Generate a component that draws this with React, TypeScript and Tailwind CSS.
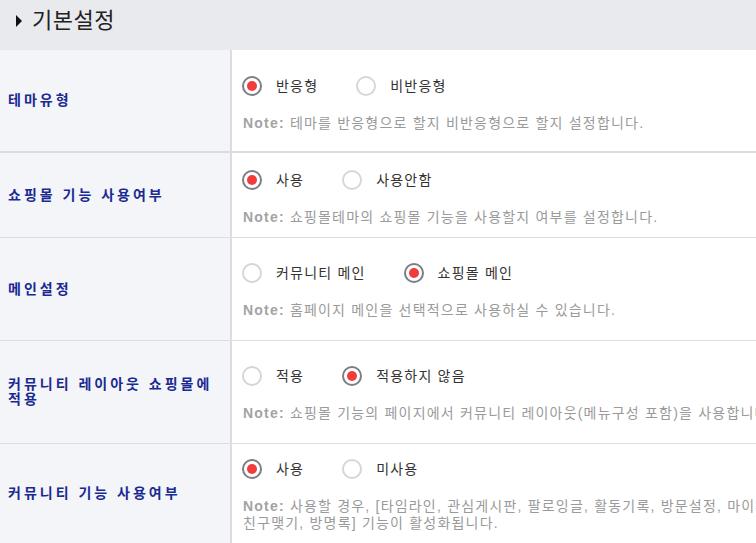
import React from "react";

type Opt = { label: string; checked: boolean };
type Row = {
  label: string;
  options: Opt[];
  note: React.ReactNode;
  h: string;
  pt: string;
  border: string;
};

function Radio({ checked }: { checked: boolean }) {
  return checked ? (
    <span className="flex h-[20px] w-[20px] shrink-0 items-center justify-center rounded-full border-2 border-[#7b7e86] bg-white">
      <span className="h-[10px] w-[10px] rounded-full bg-[#f23b3b]" />
    </span>
  ) : (
    <span className="h-[20px] w-[20px] shrink-0 rounded-full border-2 border-[#d6d6d6] bg-white" />
  );
}

const rows: Row[] = [
  {
    label: "테마유형",
    options: [
      { label: "반응형", checked: true },
      { label: "비반응형", checked: false },
    ],
    note: "테마를 반응형으로 할지 비반응형으로 할지 설정합니다.",
    h: "h-[103px]",
    pt: "pt-[26px]",
    border: "border-b-2 border-[#dcdcdc]",
  },
  {
    label: "쇼핑몰 기능 사용여부",
    options: [
      { label: "사용", checked: true },
      { label: "사용안함", checked: false },
    ],
    note: "쇼핑몰테마의 쇼핑몰 기능을 사용할지 여부를 설정합니다.",
    h: "h-[85px]",
    pt: "pt-[17px]",
    border: "border-b border-[#dedede]",
  },
  {
    label: "메인설정",
    options: [
      { label: "커뮤니티 메인", checked: false },
      { label: "쇼핑몰 메인", checked: true },
    ],
    note: "홈페이지 메인을 선택적으로 사용하실 수 있습니다.",
    h: "h-[103px]",
    pt: "pt-[25px]",
    border: "border-b border-[#dedede]",
  },
  {
    label: "커뮤니티 레이아웃 쇼핑몰에 적용",
    options: [
      { label: "적용", checked: false },
      { label: "적용하지 않음", checked: true },
    ],
    note: "쇼핑몰 기능의 페이지에서 커뮤니티 레이아웃(메뉴구성 포함)을 사용합니다.",
    h: "h-[103px]",
    pt: "pt-[25px]",
    border: "border-b border-[#dedede]",
  },
  {
    label: "커뮤니티 기능 사용여부",
    options: [
      { label: "사용", checked: true },
      { label: "미사용", checked: false },
    ],
    note: (
      <>
        사용할 경우, [타임라인, 관심게시판, 팔로잉글, 활동기록, 방문설정, 마이페이지,
        <br />
        친구맺기, 방명록] 기능이 활성화됩니다.
      </>
    ),
    h: "h-[100px]",
    pt: "pt-[15px]",
    border: "border-b border-[#dedede]",
  },
];

export default function App() {
  return (
    <div
      className="h-[543px] w-[756px] overflow-hidden bg-white"
      style={{ fontFamily: '"Liberation Sans", "Noto Sans CJK KR", sans-serif' }}
    >
      <div className="w-[1100px]">
        <div className="flex h-[50px] items-center bg-[#e9eaee] pb-[9px] pl-[16px]">
          <span className="h-0 w-0 border-y-[6px] border-l-[6px] border-y-transparent border-l-[#111]" />
          <span className="ml-[10px] text-[22px] leading-[26px] tracking-[0.5px] text-[#222]">기본설정</span>
        </div>
        {rows.map((r, i) => (
          <div key={i} className={`flex ${r.h} ${r.border}`}>
            <div className="flex w-[232px] shrink-0 items-center border-r-2 border-[#dcdcdc] bg-[#f4f5f8] pl-[8px] pr-[10px]">
              <span className="break-keep text-[14px] font-bold leading-[15px] tracking-[3px] text-[#1a2a92]">
                {r.label}
              </span>
            </div>
            <div className={`flex-1 pl-[10px] ${r.pt}`}>
              <div className="flex h-[20px] items-center">
                {r.options.map((o, j) => (
                  <div key={j} className="mr-[38px] flex items-center">
                    <Radio checked={o.checked} />
                    <span className="ml-[14px] text-[14px] leading-[20px] tracking-[1.2px] text-[#333]">
                      {o.label}
                    </span>
                  </div>
                ))}
              </div>
              <div className="ml-[1px] mt-[19px] whitespace-nowrap text-[14px] leading-[17px] tracking-[1.2px] text-[#9a9a9a]">
                <span className="font-bold text-[#a3a3a3]">Note:</span> {r.note}
              </div>
            </div>
          </div>
        ))}
      </div>
    </div>
  );
}
